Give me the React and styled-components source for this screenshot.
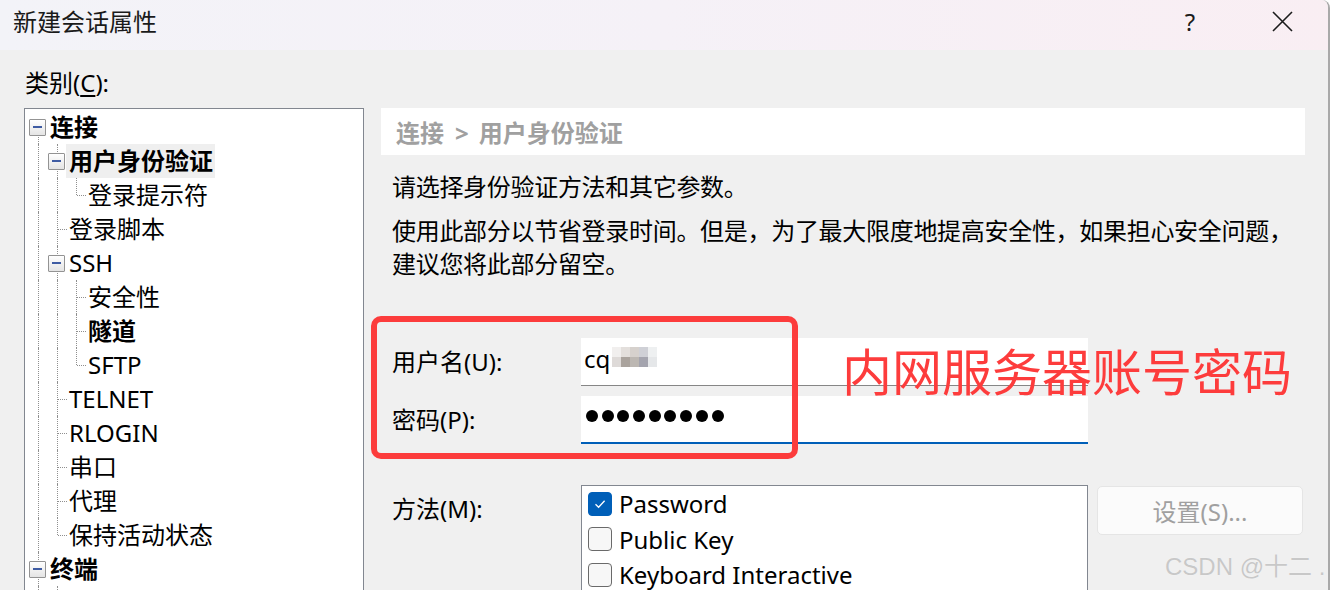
import React from 'react';
import styled, { createGlobalStyle } from 'styled-components';

const GlobalStyle = createGlobalStyle`
  html, body {
    margin: 0;
    padding: 0;
    background: #ffffff;
  }
  body {
    font-family: "Noto Sans", "Noto Sans CJK SC", sans-serif;
    color: #000;
  }
  * {
    box-sizing: border-box;
  }
`;

const TREE = [
  { label: '连接', level: 0, bold: true, open: true },
  { label: '用户身份验证', level: 1, bold: true, open: true, selected: true },
  { label: '登录提示符', level: 2 },
  { label: '登录脚本', level: 1 },
  { label: 'SSH', level: 1, open: true },
  { label: '安全性', level: 2 },
  { label: '隧道', level: 2, bold: true },
  { label: 'SFTP', level: 2 },
  { label: 'TELNET', level: 1 },
  { label: 'RLOGIN', level: 1 },
  { label: '串口', level: 1 },
  { label: '代理', level: 1 },
  { label: '保持活动状态', level: 1 },
  { label: '终端', level: 0, bold: true, open: true },
  { label: '键盘', level: 1 },
  { label: 'VT 模式', level: 1 },
  { label: '高级', level: 1 },
  { label: '外观', level: 0, bold: true, open: true },
  { label: '窗口', level: 1 },
];

const hasNextSibling = (i) => {
  for (let j = i + 1; j < TREE.length; j++) {
    if (TREE[j].level < TREE[i].level) return false;
    if (TREE[j].level === TREE[i].level) return true;
  }
  return false;
};

const guidesFor = (i) => {
  const out = [];
  for (let k = 0; k < TREE[i].level; k++) {
    let a = i - 1;
    while (a >= 0 && TREE[a].level !== k) a--;
    out.push(a >= 0 && hasNextSibling(a));
  }
  return out;
};

const MOSAIC = [
  '#f1efee', '#e3dfdc', '#d6d1cd', '#cfd0d6', '#eef0f1',
  '#dedad8', '#aaa39d', '#bcb7b2', '#a4a4ae', '#e5e7e9',
];

const App = () => {
  return (
    <>
      <GlobalStyle />
      <Window>
        <TitleBar>
          <Title>新建会话属性</Title>
          <TitleButtons>
            <TitleButton>?</TitleButton>
            <TitleButton>
              <svg width="21" height="21" viewBox="0 0 21 21">
                <path d="M1 1 L20 20 M20 1 L1 20" stroke="#1b1b1b" strokeWidth="1.6" fill="none" />
              </svg>
            </TitleButton>
          </TitleButtons>
        </TitleBar>

        <Body>
          <CategoryLabel>
            类别(<u>C</u>):
          </CategoryLabel>
          <Columns>
            <TreeBox>
              {TREE.map((item, i) => (
                <TreeRow key={i}>
                  {guidesFor(i).map((on, k) => (
                    <Guide key={k} $on={on} />
                  ))}
                  <NodeCell $up={i !== 0} $down={hasNextSibling(i)} $stub={!item.open}>
                    {item.open && (
                      <Expander>
                        <Minus />
                      </Expander>
                    )}
                  </NodeCell>
                  <NodeLabel $bold={item.bold} $selected={item.selected}>
                    {item.label}
                  </NodeLabel>
                </TreeRow>
              ))}
            </TreeBox>

            <RightPanel>
              <Header>
                连接<Sep>&gt;</Sep>用户身份验证
              </Header>
              <Description>
                <Para>请选择身份验证方法和其它参数。</Para>
                <Para $gap>
                  使用此部分以节省登录时间。但是，为了最大限度地提高安全性，如果担心安全问题，
                  <br />
                  建议您将此部分留空。
                </Para>
              </Description>

              <Form>
                <FieldRow>
                  <FieldLabel>用户名(U):</FieldLabel>
                  <TextField>
                    cq
                    <Mosaic>
                      {MOSAIC.map((c, i) => (
                        <MosaicCell key={i} $c={c} />
                      ))}
                    </Mosaic>
                  </TextField>
                </FieldRow>
                <FieldRow $second>
                  <FieldLabel>密码(P):</FieldLabel>
                  <TextField $focused>
                    <Dots>
                      {Array.from({ length: 9 }).map((_, i) => (
                        <Dot key={i} />
                      ))}
                    </Dots>
                  </TextField>
                </FieldRow>

                <MethodRow>
                  <FieldLabel $top>方法(M):</FieldLabel>
                  <ListBox>
                    <CheckRow>
                      <CheckBox $checked>
                        <svg width="14" height="14" viewBox="0 0 14 14">
                          <path d="M2.5 7.2 L5.6 10.2 L11.6 3.8" stroke="#fff" strokeWidth="1.3" fill="none" />
                        </svg>
                      </CheckBox>
                      Password
                    </CheckRow>
                    <CheckRow>
                      <CheckBox />
                      Public Key
                    </CheckRow>
                    <CheckRow>
                      <CheckBox />
                      Keyboard Interactive
                    </CheckRow>
                  </ListBox>
                  <SettingsButton disabled>设置(S)...</SettingsButton>
                </MethodRow>
              </Form>

              <RedFrame />
              <RedNote>内网服务器账号密码</RedNote>
            </RightPanel>
          </Columns>
        </Body>

        <Watermark>CSDN @十二 .</Watermark>
      </Window>
    </>
  );
};

export default App;

const Window = styled.div`
  position: relative;
  width: 1330px;
  height: 590px;
  overflow: hidden;
  background: #f0f0f0;
  border-right: 2px solid #a9a9a9;
  border-top-right-radius: 8px;
`;

const TitleBar = styled.div`
  height: 50px;
  display: flex;
  align-items: flex-start;
  justify-content: space-between;
  padding: 4px 0 0 13px;
  background: linear-gradient(90deg, #f3f3f8 0%, #f5f1f7 50%, #f9eef3 100%);
`;

const Title = styled.div`
  font-family: "Noto Sans CJK SC", sans-serif;
  font-size: 24px;
  line-height: 34px;
  color: #1a1a1a;
`;

const TitleButtons = styled.div`
  display: flex;
  margin-top: -4px;
`;

const TitleButton = styled.div`
  width: 92px;
  height: 42px;
  display: flex;
  align-items: center;
  justify-content: center;
  font-size: 24px;
  color: #1b1b1b;
`;

const Body = styled.div`
  padding-left: 24px;
`;

const CategoryLabel = styled.div`
  margin-top: 16px;
  height: 34px;
  line-height: 34px;
  font-size: 24px;
  padding-left: 1px;

  u {
    text-underline-offset: 3px;
  }
`;

const Columns = styled.div`
  display: flex;
  gap: 17px;
  margin-top: 8px;
`;

const TreeBox = styled.div`
  width: 340px;
  height: 520px;
  flex-shrink: 0;
  background: #fff;
  border: 1px solid #828790;
  padding: 1px 0 0 3px;
  overflow: hidden;
`;

const TreeRow = styled.div`
  display: flex;
  height: 34px;
`;

const Guide = styled.div`
  position: relative;
  width: 19px;
  flex-shrink: 0;

  &::before {
    content: '';
    display: ${(p) => (p.$on ? 'block' : 'none')};
    position: absolute;
    left: 10px;
    top: 0;
    bottom: 0;
    border-left: 1px dotted #8f8f8f;
  }
`;

const NodeCell = styled.div`
  position: relative;
  width: 19px;
  flex-shrink: 0;
  display: flex;
  align-items: center;
  padding-left: 1px;

  &::before {
    content: '';
    position: absolute;
    left: 10px;
    top: ${(p) => (p.$up ? '0' : '50%')};
    bottom: ${(p) => (p.$down ? '0' : '50%')};
    border-left: 1px dotted #8f8f8f;
  }

  &::after {
    content: '';
    display: ${(p) => (p.$stub ? 'block' : 'none')};
    position: absolute;
    left: 11px;
    right: -1px;
    top: 50%;
    border-top: 1px dotted #8f8f8f;
  }
`;

const Expander = styled.div`
  position: relative;
  z-index: 1;
  width: 17px;
  height: 17px;
  border: 1px solid #939393;
  border-radius: 1px;
  background: linear-gradient(180deg, #ffffff 0%, #e4e4e4 100%);
  display: flex;
  align-items: center;
  justify-content: center;
`;

const Minus = styled.div`
  width: 9px;
  height: 2px;
  background: #3f5ca3;
`;

const NodeLabel = styled.div`
  height: 34px;
  line-height: 34px;
  padding: 0 2px 0 3px;
  font-size: 24px;
  white-space: nowrap;
  font-weight: ${(p) => (p.$bold ? 700 : 400)};
  background: ${(p) => (p.$selected ? '#efefef' : 'transparent')};
`;

const RightPanel = styled.div`
  position: relative;
  width: 924px;
  flex-shrink: 0;
`;

const Header = styled.div`
  height: 47px;
  background: #fff;
  padding: 2px 0 0 15px;
  line-height: 45px;
  font-size: 24px;
  font-weight: 700;
  color: #a0a0a0;
`;

const Sep = styled.span`
  margin: 0 10px 0 11px;
`;

const Description = styled.div`
  padding: 0 0 0 11px;
  margin-top: 15px;
`;

const Para = styled.p`
  margin: ${(p) => (p.$gap ? '11px' : '0')} 0 0;
  font-size: 24px;
  line-height: 33px;
  letter-spacing: -0.3px;
  white-space: nowrap;
`;

const Form = styled.div`
  margin-top: 58px;
  display: flex;
  flex-direction: column;
`;

const FieldRow = styled.div`
  display: flex;
  align-items: center;
  height: 48px;
  margin-top: ${(p) => (p.$second ? '10px' : '0')};
`;

const FieldLabel = styled.div`
  width: 200px;
  flex-shrink: 0;
  padding-left: 11px;
  font-size: 24px;
  line-height: 34px;
  align-self: ${(p) => (p.$top ? 'flex-start' : 'center')};
  padding-top: ${(p) => (p.$top ? '7px' : '0')};
`;

const TextField = styled.div`
  width: 507px;
  height: 48px;
  background: #fff;
  border-bottom: ${(p) => (p.$focused ? '2px solid #005fb8' : '1px solid #868686')};
  padding: 0 0 0 3px;
  display: flex;
  align-items: flex-start;
  font-size: 24px;
  line-height: 42px;
`;

const Mosaic = styled.div`
  display: grid;
  grid-template-columns: repeat(5, 9px);
  grid-auto-rows: 10px;
  margin: 9px 0 0 2px;
`;

const MosaicCell = styled.div`
  background: ${(p) => p.$c};
`;

const Dots = styled.div`
  display: flex;
  gap: 3.7px;
  padding: 14px 0 0 2px;
`;

const Dot = styled.span`
  width: 12px;
  height: 12px;
  border-radius: 50%;
  background: #000;
`;

const MethodRow = styled.div`
  display: flex;
  align-items: flex-start;
  margin-top: 41px;
`;

const ListBox = styled.div`
  width: 507px;
  height: 140px;
  flex-shrink: 0;
  background: #fff;
  border: 1px solid #828790;
  padding: 0 0 0 6px;
`;

const CheckRow = styled.div`
  display: flex;
  align-items: center;
  gap: 7px;
  height: 35.5px;
  font-size: 24px;
  white-space: nowrap;
`;

const CheckBox = styled.span`
  width: 24px;
  height: 24px;
  border-radius: 4px;
  display: flex;
  align-items: center;
  justify-content: center;
  background: ${(p) => (p.$checked ? '#005fb8' : '#f7f7f7')};
  border: ${(p) => (p.$checked ? '1px solid #005fb8' : '1.5px solid #6a6a6a')};
`;

const SettingsButton = styled.button`
  margin: 1px 0 0 9px;
  width: 206px;
  height: 49px;
  background: #fbfbfb;
  border: 1px solid #e5e5e5;
  border-radius: 5px;
  font-family: "Noto Sans", "Noto Sans CJK SC", sans-serif;
  font-size: 24px;
  color: #a0a0a0;
  padding: 0;
`;

const RedFrame = styled.div`
  position: absolute;
  left: -10px;
  top: 208px;
  width: 427px;
  height: 143px;
  border: 6px solid #fc3c3c;
  border-radius: 10px;
  pointer-events: none;
`;

const RedNote = styled.div`
  position: absolute;
  left: 461px;
  top: 232px;
  font-family: "Noto Sans CJK SC", sans-serif;
  font-size: 50px;
  line-height: 58px;
  color: #fd3c3c;
  white-space: nowrap;
`;

const Watermark = styled.div`
  position: absolute;
  left: 1165px;
  top: 553px;
  font-family: "Liberation Sans", "Noto Sans CJK SC", sans-serif;
  font-size: 24px;
  line-height: 28px;
  color: #c8c8c8;
  text-shadow: 0 0 1px rgba(255, 255, 255, 0.8);
  white-space: nowrap;
`;
